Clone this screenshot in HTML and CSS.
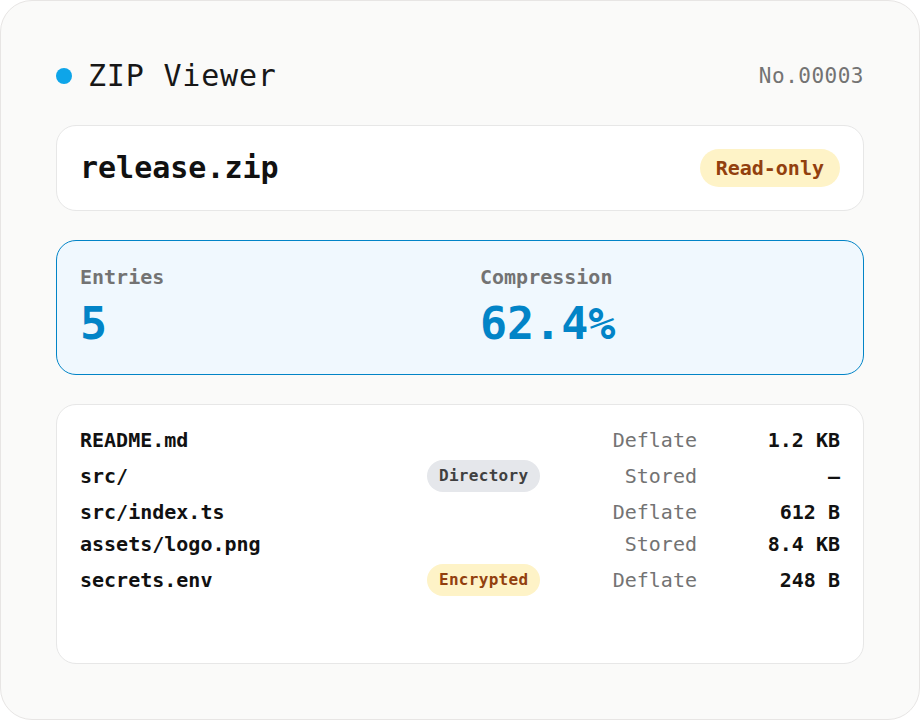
FILE: index.html
```html
<!DOCTYPE html>
<html lang="en">
<head>
    <meta charset="UTF-8">
    <meta name="viewport" content="width=device-width, initial-scale=1.0">
    <title>ZIP Viewer</title>
    <link rel="stylesheet" href="styles.css">
</head>
<body>
    <div class="viewer">
        <!-- ヘッダー -->
        <header class="viewer-header">
            <div class="title">
                <span class="dot"></span>
                <h1>ZIP Viewer</h1>
            </div>
            <span class="serial">No.00003</span>
        </header>

        <!-- アーカイブ名 -->
        <section class="card archive">
            <h2>release.zip</h2>
            <span class="badge badge-amber badge-lg">Read-only</span>
        </section>

        <!-- 統計 -->
        <section class="card stats">
            <div class="stat">
                <div class="stat-label">Entries</div>
                <div class="stat-value">5</div>
            </div>
            <div class="stat">
                <div class="stat-label">Compression</div>
                <div class="stat-value">62.4%</div>
            </div>
        </section>

        <!-- ファイル一覧 -->
        <section class="card files">
            <div class="file-row">
                <span class="name">README.md</span>
                <span class="tag"></span>
                <span class="method">Deflate</span>
                <span class="size">1.2 KB</span>
            </div>
            <div class="file-row">
                <span class="name">src/</span>
                <span class="tag"><span class="badge badge-gray">Directory</span></span>
                <span class="method">Stored</span>
                <span class="size">—</span>
            </div>
            <div class="file-row">
                <span class="name">src/index.ts</span>
                <span class="tag"></span>
                <span class="method">Deflate</span>
                <span class="size">612 B</span>
            </div>
            <div class="file-row">
                <span class="name">assets/logo.png</span>
                <span class="tag"></span>
                <span class="method">Stored</span>
                <span class="size">8.4 KB</span>
            </div>
            <div class="file-row">
                <span class="name">secrets.env</span>
                <span class="tag"><span class="badge badge-amber">Encrypted</span></span>
                <span class="method">Deflate</span>
                <span class="size">248 B</span>
            </div>
        </section>
    </div>
</body>
</html>
```

FILE: styles.css
```css
body {
    margin: 0;
    padding: 0;
    background-color: #ffffff;
    font-family: "DejaVu Sans Mono", "Liberation Mono", monospace;
    color: #171717;
}
.viewer {
    box-sizing: border-box;
    width: 920px;
    height: 720px;
    padding: 55px;
    background-color: #fafaf9;
    border: 1px solid #e7e5e4;
    border-radius: 32px;
    display: flex;
    flex-direction: column;
    gap: 29px;
}
.viewer-header {
    display: flex;
    align-items: center;
    justify-content: space-between;
    height: 40px;
}
.title {
    display: flex;
    align-items: center;
    gap: 16px;
}
.dot {
    width: 16px;
    height: 16px;
    border-radius: 50%;
    background-color: #0ea5e9;
}
h1 {
    margin: 0;
    font-size: 30px;
    font-weight: normal;
    line-height: 40px;
    letter-spacing: 0.8px;
}
.serial {
    font-size: 21px;
    color: #737373;
    letter-spacing: 0.5px;
}
.card {
    background-color: #ffffff;
    border: 1px solid #e7e7e7;
    border-radius: 20px;
}
.archive {
    display: flex;
    align-items: center;
    justify-content: space-between;
    padding: 23px;
}
h2 {
    margin: 0;
    font-size: 30px;
    font-weight: bold;
    line-height: 38px;
    color: #111111;
}
.badge {
    display: inline-flex;
    align-items: center;
    height: 32px;
    padding: 0 12px;
    border-radius: 16px;
    font-size: 16px;
    font-weight: bold;
    letter-spacing: 0.3px;
}
.badge-lg {
    height: 38px;
    padding: 0 16px;
    border-radius: 19px;
    font-size: 20px;
    letter-spacing: 0;
}
.badge-amber {
    background-color: #fef3c7;
    color: #92400e;
}
.badge-gray {
    background-color: #e5e7eb;
    color: #404040;
}
.stats {
    background-color: #f0f8fe;
    border-color: #0284c7;
    padding: 24px 23px;
    display: grid;
    grid-template-columns: 1fr 1fr;
    column-gap: 40px;
}
.stat-label {
    font-size: 20px;
    line-height: 24px;
    font-weight: bold;
    color: #737373;
}
.stat-value {
    margin-top: 8px;
    font-size: 45px;
    line-height: 53px;
    font-weight: bold;
    color: #0284c7;
}
.files {
    flex: 1;
    padding: 23px;
    display: flex;
    flex-direction: column;
    gap: 8px;
}
.file-row {
    display: grid;
    grid-template-columns: 1fr 112px 134px 119px;
    column-gap: 24px;
    align-items: center;
    font-size: 20px;
    line-height: 24px;
}
.name {
    font-weight: bold;
    color: #111111;
}
.tag {
    display: flex;
}
.method {
    text-align: right;
    color: #737373;
}
.size {
    text-align: right;
    font-weight: bold;
    color: #111111;
}
```
